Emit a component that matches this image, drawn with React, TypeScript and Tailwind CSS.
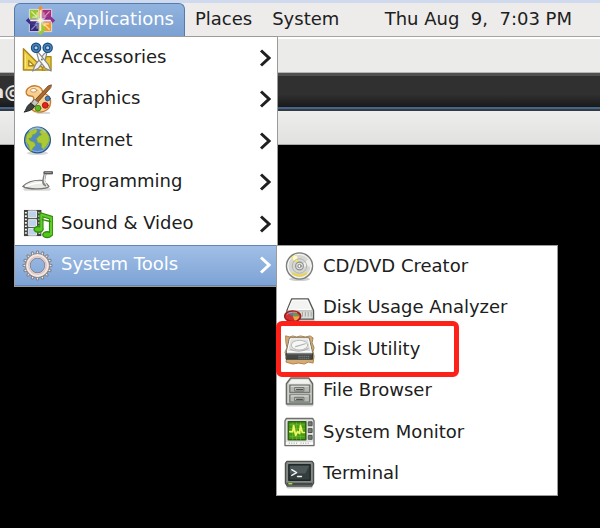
import type { ReactNode } from "react";

type Item = { label: string; icon: ReactNode; active?: boolean; marked?: boolean };

function Icon({ children }: { children: ReactNode }) {
  return (
    <svg viewBox="0 0 32 32" className="size-[31px] shrink-0" aria-hidden="true" strokeLinejoin="round" strokeLinecap="round">
      {children}
    </svg>
  );
}

function Chevron() {
  return (
    <svg viewBox="0 0 12 18" className="h-[18px] w-3 shrink-0" aria-hidden="true" fill="none" stroke="currentColor" strokeWidth="3">
      <path d="M2 1.5 10 9 2 16.5" />
    </svg>
  );
}

const petals = [
  { angle: 0, square: "#a3307f", tip: "#f0922b", inner: "#d58fc0" },
  { angle: 90, square: "#f09a28", tip: "#8f2f8c", inner: "#ffe0a0" },
  { angle: 180, square: "#33287c", tip: "#9ccb2f", inner: "#8d86c4" },
  { angle: 270, square: "#9bc634", tip: "#3b2f86", inner: "#dcef9f" },
];

const centosIcon = (
  <Icon>
    <g strokeLinejoin="miter">
      {petals.map((p) => (
        <g key={p.angle} transform={`rotate(${p.angle} 16 16)`}>
          <path d="M16 .8 20.500 5.500v4L16 13l-4.500-3.500v-4z" fill={p.tip} />
          <path d="M17.800 4.500H27.500v9.700h-9.700z" fill={p.square} stroke="#e9e3ea" strokeWidth=".9" />
          <path d="m19.500 12.500 5.500-5.500M19.500 8v4.500H24" fill="none" stroke={p.inner} strokeWidth="1.300" />
        </g>
      ))}
      <path d="M16 6v20M6 16h20" stroke="#f7edda" strokeWidth="1.600" />
      <path d="m16 13 3 3-3 3-3-3z" fill="#fff5cd" />
    </g>
  </Icon>
);

const accessoriesIcon = (
  <Icon>
    <path d="M1.500 7v22h22zM7 19l5.500 5.500H7z" fill="#edcf46" stroke="#ae8615" strokeWidth="1.500" fillRule="evenodd" />
    <path d="M25 15h5v14h-9z" fill="#e8c936" stroke="#ae8615" strokeWidth="1.300" />
    <path d="M3.500 13v14M6 27h13" stroke="#fff0a0" strokeWidth=".9" />
    <path d="m23 12 3-2-2 8-7 9-6 3 3-7z" fill="#eeeeec" stroke="#858985" strokeWidth="1.200" />
    <path d="m17 11-2-1 2 8 7 9 6 3-3-7z" fill="#f8f8f7" stroke="#858985" strokeWidth="1.200" />
    <circle cx="20.500" cy="18" r="1" fill="#6d716d" />
    <circle cx="14.500" cy="6" r="3.500" fill="#b8cddf" stroke="#174b84" strokeWidth="3.800" />
    <circle cx="14.500" cy="6" r="3.500" fill="none" stroke="#4c84ba" strokeWidth="1.600" />
    <circle cx="26.500" cy="6" r="3.500" fill="#b8cddf" stroke="#174b84" strokeWidth="3.800" />
    <circle cx="26.500" cy="6" r="3.500" fill="none" stroke="#4c84ba" strokeWidth="1.600" />
  </Icon>
);

const graphicsIcon = (
  <Icon>
    <path d="M16 30h12" stroke="#d8d8d8" strokeWidth="2" />
    <path d="M7 4C12 0 20 2 21 7c1 4 8 3 8.500 10C30 25 25 29 17 29c-6 0-9-4-8-8 .8-3 4-3 3-7C11 11 6 14 4.600 10 3.800 8 5 5.500 7 4z" fill="#f6cf91" stroke="#c97d30" strokeWidth="1.400" />
    <path d="M7 6c4-4 11-2 12 2 1 4 8 4 8 10" fill="none" stroke="#ffe7bf" strokeWidth="1.300" />
    <ellipse cx="12" cy="6.500" rx="3.200" ry="1.900" fill="#fff" stroke="#d18d43" />
    <circle cx="16.500" cy="25" r="3" fill="#62b526" stroke="#3e8713" />
    <circle cx="24" cy="22" r="3" fill="#df2421" stroke="#a91614" />
    <circle cx="26.500" cy="15" r="2.500" fill="#467db7" stroke="#285b91" />
    <path d="m30 1-3 1-13 14 2 3L29.500 4z" fill="#a96a31" stroke="#704018" strokeWidth=".9" />
    <path d="m13 16 4 3-4 4-3-3z" fill="#c4c7c5" stroke="#6c706c" />
    <path d="m9 20 4 3c-2 4-6 5-11 6 3-2 2-7 7-9z" fill="#3d413f" stroke="#242725" />
  </Icon>
);

const internetIcon = (
  <Icon>
    <ellipse cx="16" cy="29" rx="11" ry="2" fill="#d7d7d7" />
    <circle cx="16" cy="15.500" r="13.300" fill="#5189c5" stroke="#28578f" strokeWidth="1.300" />
    <circle cx="16" cy="15.500" r="12" fill="none" stroke="#8ab4dd" strokeWidth="1" />
    <path d="m5 10 4-4 5-2 2 2-2 3-3 1-1 3-3 1 1 2 5 2 1 3-3 3-1 3-2-1-1-5-3-4zM18 7l3-3 4 3 3 5 0 5-3 5-3 3-2-2v-4l-4-1-1-4 3-3 2-1z" fill="#abc835" stroke="#80a321" strokeWidth=".7" />
    <path d="M8 6c4-4 12-4 16 1" fill="none" stroke="#c0d4e5" opacity=".5" strokeWidth="2" />
  </Icon>
);

const programmingIcon = (
  <Icon>
    <path d="M3 23h25" stroke="#d9d9d8" strokeWidth="3" />
    <path d="M0.800 20c6-6 13-7 22-6l5 6c-2 3-20 4-27 0z" fill="#e9e9e6" stroke="#72746f" strokeWidth="1.200" />
    <path d="M4 20c6-3 12-4 21-4" fill="none" stroke="#fff" strokeWidth="1.500" />
    <path d="M25 19c-5-2-2-6-1-13h7" fill="none" stroke="#80837e" strokeWidth="3" strokeLinecap="butt" />
    <path d="M25 18c-3-2-2-5-1-11" fill="none" stroke="#e4e5e0" strokeWidth="1.200" />
    <path d="M23.500 6H31" stroke="#5b5d5a" strokeWidth="3" />
    <path d="M24 5.500h6" stroke="#a5a7a3" strokeWidth="1" />
  </Icon>
);

const soundIcon = (
  <Icon>
    <path d="M2 2h18v27H2z" fill="#414441" />
    <path d="M7 3h8v7H7zm0 9h8v7H7zm0 9h8v7H7z" fill="#bdd3ed" stroke="#f0f1ed" />
    <path d="M4 4v24M18 4v24" stroke="#fafafa" strokeWidth="2" strokeDasharray="1.700 1.800" strokeLinecap="butt" />
    <path d="M20 22V7l10 3v17" fill="none" stroke="#318d0b" strokeWidth="4.500" strokeLinejoin="miter" />
    <ellipse cx="17" cy="22" rx="4.500" ry="3" fill="#51c61d" stroke="#318d0b" strokeWidth="1.500" />
    <ellipse cx="26" cy="27.500" rx="4.500" ry="3" fill="#51c61d" stroke="#318d0b" strokeWidth="1.500" />
    <path d="M20 22V7l10 3v17" fill="none" stroke="#61cd2b" strokeWidth="2.200" />
    <path d="m21 12 8 2" stroke="#318d0b" strokeWidth="1.500" />
  </Icon>
);

const gearTeeth = Array.from({ length: 16 }, (_, i) => i * 22.5);

const gearIcon = (
  <Icon>
    {gearTeeth.map((angle) => (
      <path key={angle} d="m14.300 5 .8-4h1.800l.8 4z" transform={`rotate(${angle} 16 16)`} fill="#efe9e8" stroke="#7d7f86" strokeWidth="1" />
    ))}
    <circle cx="16" cy="16" r="9.900" fill="none" stroke="#7f7c80" strokeWidth="5.400" />
    <circle cx="16" cy="16" r="9.900" fill="none" stroke="#f3e6e3" strokeWidth="3.800" />
    <circle cx="16" cy="16" r="9" fill="none" stroke="#dcc6c3" strokeWidth="1.400" />
  </Icon>
);

const discIcon = (
  <Icon>
    <ellipse cx="16" cy="29" rx="11" ry="2" fill="#d0d0d0" />
    <circle cx="16" cy="15.500" r="13.500" fill="#d6d6d3" stroke="#7b7f7a" strokeWidth="1.400" />
    <circle cx="16" cy="15.500" r="12" fill="none" stroke="#fafafa" />
    <path d="m13 12-6-5a13 13 0 0 1 6-3l2 8z" fill="#f2e35f" />
    <path d="M9 22q7 5 14 0l1 2q-8 5-16 0z" fill="#ead448" />
    <path d="m20 13 6-5q2 3 1 8h-7z" fill="#efefee" />
    <circle cx="11.500" cy="7.500" r="2.500" fill="#fffbd0" />
    <circle cx="16" cy="15.500" r="7.500" fill="none" stroke="#b0b2ae" />
    <circle cx="16" cy="15.500" r="4" fill="#e2e2df" stroke="#8e918d" strokeWidth="1.200" />
    <circle cx="16" cy="15.500" r="1.700" fill="#fff" stroke="#777b76" />
  </Icon>
);

const analyzerIcon = (
  <Icon>
    <path d="M5 28h25" stroke="#c9c9c9" strokeWidth="3" />
    <path d="M8 6h17l5.500 12v9H3v-9z" fill="#dcdedb" stroke="#555955" strokeWidth="1.400" />
    <path d="M9 7.500h15l4 9.500H5z" fill="#f3f3f2" stroke="#fff" />
    <path d="M4 18.500h25" stroke="#b5b8b3" />
    <path d="M19 20v4M22 20v4M25 20v4M28 20v4" stroke="#9da09b" />
    <ellipse cx="9" cy="24" rx="8.300" ry="5.500" fill="#cf3330" stroke="#9e201e" strokeWidth="1.600" />
    <path d="M9 24v-4q6 0 7 4z" fill="#6a9659" />
    <path d="M9 24h7q-1 4-5 4.500z" fill="#e7a84d" />
    <path d="m9 24-5-3q2-2 5-1z" fill="#577caf" />
    <path d="M3 22q3-3 10-2" fill="none" stroke="#edaaa6" strokeWidth=".8" />
  </Icon>
);

const utilityIcon = (
  <Icon>
    <path d="m2 2 4 1 3-1 4 1 4-1 5 1 5-1 3 2-1 5 2 5-1 4 1 5-1 7-5-1-4 2-6-1-6 1-7-2 1-5-2-5 2-5-1-5z" fill="#d5ab73" stroke="#a98250" />
    <path d="M6 4h20l3.500 15v2h-27v-2z" fill="#e7e8e6" stroke="#747873" />
    <path d="M7 5h18l3 13H4z" fill="#dfe0de" stroke="#fff" />
    <ellipse cx="16" cy="11.500" rx="8.500" ry="5" fill="#f6f7f5" stroke="#b5b8b4" />
    <path d="M7 16q9 4 18-1M12 13l10-3" fill="none" stroke="#b0b3af" strokeWidth="1.200" />
    <path d="M2.500 20.500h27V26h-27z" fill="#444947" stroke="#303432" />
    <path d="M3.500 20.500h25" stroke="#868e8a" />
    <path d="M15 23h12M15 25h12" stroke="#92a29c" strokeDasharray="1 1" strokeLinecap="butt" />
  </Icon>
);

const cabinetIcon = (
  <Icon>
    <path d="M4 30h25" stroke="#cfcfcd" strokeWidth="3" />
    <path d="M7 2h18.500l4 6v21h-27V8z" fill="#cfd1cc" stroke="#656963" strokeWidth="1.500" />
    <path d="M8 3.500h17L27.500 8h-23z" fill="#f2f3f0" />
    <path d="M6 9.500h20.500V17H6zm0 10h20.500V27H6z" fill="#b5b8b3" stroke="#757974" strokeWidth="1.400" />
    <path d="M7.500 10.500h17.500M7.500 20.500h17.500" stroke="#e6e7e4" />
    <path d="M11.500 12h9v3.500h-9zm0 10h9v3.500h-9z" fill="#dedfdb" stroke="#656963" />
    <path d="M13 14h6M13 24h6" stroke="#515550" strokeWidth="1.500" />
  </Icon>
);

const monitorIcon = (
  <Icon>
    <path d="M2.500 1.500h27L31 4v25.500H1V4z" fill="#e1e2df" stroke="#6d706b" strokeWidth="1.400" />
    <path d="M2 26h28v2.500H2z" fill="#fafaf9" />
    <path d="M4.500 5h18v18.500h-18z" fill="#469c11" stroke="#315f19" strokeWidth="1.600" />
    <path d="M6 8h15M6 12h15M6 16h15M6 20h15M9 6v17M13 6v17M17 6v17" stroke="#72ba37" strokeWidth=".7" />
    <path d="M6 15h3l1-6 2 10 2-4 2 2 1-8 2 7h2" fill="none" stroke="#eff565" strokeWidth="1.800" />
    <path d="M25.500 5H29v4h-3.500zm0 7H29v4h-3.500zm0 7H29v4h-3.500z" fill="#777b76" stroke="#484c47" />
    <path d="M5 27h10M17 27h9" stroke="#8e918c" strokeDasharray="1 1.500" strokeLinecap="butt" />
  </Icon>
);

const terminalIcon = (
  <Icon>
    <path d="M4 29h24" stroke="#c8c9c7" strokeWidth="3" />
    <path d="M3 2.500h26l1.500 2V25l-2 3h-25l-2-3V4.500z" fill="#858a86" stroke="#4b504d" strokeWidth="1.400" />
    <path d="M5 6h22v16H5z" fill="#343d3e" stroke="#1f2728" strokeWidth="1.500" />
    <path d="M6 7h20l-4 8H6z" fill="#4c5757" />
    <path d="m8 11 5 3-5 3" fill="none" stroke="#f1f2f0" strokeWidth="1.500" />
    <path d="M14 18h4" stroke="#f1f2f0" strokeWidth="1.500" />
    <path d="M2.500 24.500h27L28.500 27H4z" fill="#444945" />
    <path d="M5 25.500h3" stroke="#a4dd49" strokeWidth="1.500" />
  </Icon>
);

const applications: Item[] = [
  { label: "Accessories", icon: accessoriesIcon },
  { label: "Graphics", icon: graphicsIcon },
  { label: "Internet", icon: internetIcon },
  { label: "Programming", icon: programmingIcon },
  { label: "Sound & Video", icon: soundIcon },
  { label: "System Tools", icon: gearIcon, active: true },
];

const systemTools: Item[] = [
  { label: "CD/DVD Creator", icon: discIcon },
  { label: "Disk Usage Analyzer", icon: analyzerIcon },
  { label: "Disk Utility", icon: utilityIcon, marked: true },
  { label: "File Browser", icon: cabinetIcon },
  { label: "System Monitor", icon: monitorIcon },
  { label: "Terminal", icon: terminalIcon },
];

function MenuItem({ item, submenu }: { item: Item; submenu?: boolean }) {
  return (
    <li role="none" className="relative grid">
      <button
        type="button"
        role="menuitem"
        aria-haspopup={submenu ? "menu" : undefined}
        aria-expanded={submenu ? Boolean(item.active) : undefined}
        className={
          item.active
            ? "flex items-center gap-2 border-y border-[#6287b8] bg-linear-to-b from-[#a1bfe6] to-[#7da3d5] pr-1.5 pl-[7px] text-left text-white"
            : "flex items-center gap-2 pr-1.5 pl-[7px] text-left"
        }
      >
        {item.icon}
        <span className="grow whitespace-nowrap pb-0.5">{item.label}</span>
        {submenu && <Chevron />}
      </button>
      {item.marked && (
        <span className="pointer-events-none absolute -top-2 -bottom-1.5 -left-px w-[183px] rounded-md border-[5px] border-[#fc2119]" />
      )}
    </li>
  );
}

export default function App() {
  return (
    <div className="relative min-h-screen overflow-hidden bg-black font-['DejaVu_Sans',sans-serif] text-[18px] leading-6 text-[#202020]">
      <header className="flex h-[37px] items-stretch border-t-3 border-b border-t-[#cfdaef] border-b-[#a5a5a4] bg-[#edeceb] pl-3.5">
        <nav className="flex items-stretch" aria-label="Desktop">
          <button
            type="button"
            aria-haspopup="menu"
            aria-expanded="true"
            className="flex items-center gap-2 rounded-t-md border border-b-0 border-[#527cae] bg-linear-to-b from-[#91b3de] to-[#7ba1d2] px-2.5 text-white"
          >
            {centosIcon}
            <span className="pb-0.5">Applications</span>
          </button>
          <button type="button" className="px-2.5 pb-0.5">Places</button>
          <button type="button" className="px-2.5 pb-0.5">System</button>
        </nav>
        <time className="ml-auto self-center whitespace-pre pr-7 pb-0.5">Thu Aug  9,  7:03 PM</time>
      </header>

      <main>
        <div className="h-9 border-t-2 border-b border-t-white border-b-[#b5b5b5] bg-[#ebebea]" />
        <div className="flex h-9 items-center overflow-hidden border-t-3 border-b-2 border-t-[#505050] border-b-[#46658d] bg-linear-to-b from-[#303030] from-60% to-[#191919] font-bold text-[#e4e4e4]">
          <span className="-ml-2">a@</span>
        </div>
        <div className="h-9 border-t-2 border-b border-t-[#343b43] border-b-[#aaa] bg-linear-to-b from-[#eeeeed] to-[#e1e1df]" />
      </main>

      <ul role="menu" aria-label="Applications" className="absolute top-9 left-3.5 grid h-[251px] w-[264px] grid-rows-6 border border-[#9b9b9a] bg-white">
        {applications.map((item) => (
          <MenuItem key={item.label} item={item} submenu />
        ))}
      </ul>

      <ul role="menu" aria-label="System Tools" className="absolute top-[245px] left-[276px] grid h-[251px] w-[282px] grid-rows-6 border border-[#9b9b9a] bg-white">
        {systemTools.map((item) => (
          <MenuItem key={item.label} item={item} />
        ))}
      </ul>
    </div>
  );
}
